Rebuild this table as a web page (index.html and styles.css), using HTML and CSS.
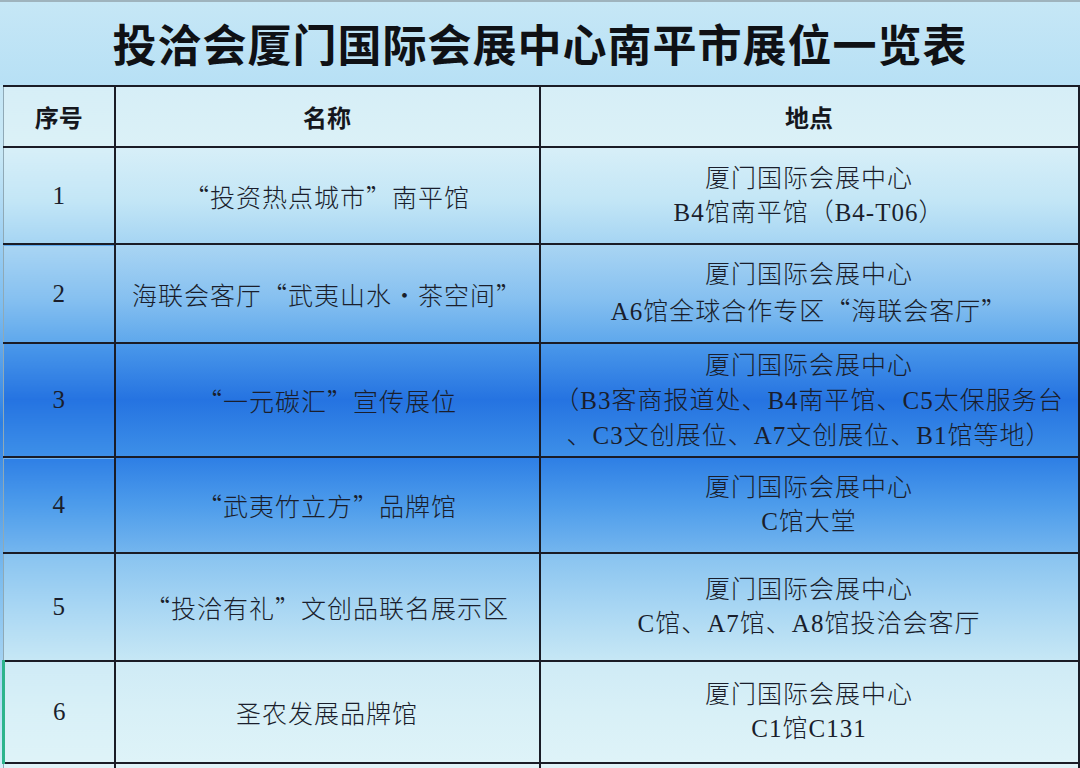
FILE: index.html
```html
<!DOCTYPE html>
<html lang="zh-CN">
<head>
<meta charset="utf-8">
<title>投洽会厦门国际会展中心南平市展位一览表</title>
<link rel="stylesheet" href="styles.css">
</head>
<body>
<div class="page">
  <div class="title">投洽会厦门国际会展中心南平市展位一览表</div>
  <table class="booths">
    <colgroup>
      <col class="c-no">
      <col class="c-name">
      <col class="c-loc">
    </colgroup>
    <thead>
      <tr class="head">
        <th>序号</th>
        <th>名称</th>
        <th>地点</th>
      </tr>
    </thead>
    <tbody>
      <tr class="r1">
        <td class="no">1</td>
        <td class="name"><span class="q">“</span>投资热点城市<span class="q">”</span>南平馆</td>
        <td class="loc">厦门国际会展中心<br>B4馆南平馆（B4-T06）</td>
      </tr>
      <tr class="r2">
        <td class="no">2</td>
        <td class="name">海联会客厅<span class="q">“</span>武夷山水<span class="q">・</span>茶空间<span class="q">”</span></td>
        <td class="loc">厦门国际会展中心<br>A6馆全球合作专区<span class="q">“</span>海联会客厅<span class="q">”</span></td>
      </tr>
      <tr class="r3">
        <td class="no">3</td>
        <td class="name"><span class="q">“</span>一元碳汇<span class="q">”</span>宣传展位</td>
        <td class="loc">厦门国际会展中心<br>（B3客商报道处、B4南平馆、C5太保服务台<br>、C3文创展位、A7文创展位、B1馆等地）</td>
      </tr>
      <tr class="r4">
        <td class="no">4</td>
        <td class="name"><span class="q">“</span>武夷竹立方<span class="q">”</span>品牌馆</td>
        <td class="loc">厦门国际会展中心<br>C馆大堂</td>
      </tr>
      <tr class="r5">
        <td class="no">5</td>
        <td class="name"><span class="q">“</span>投洽有礼<span class="q">”</span>文创品联名展示区</td>
        <td class="loc">厦门国际会展中心<br>C馆、A7馆、A8馆投洽会客厅</td>
      </tr>
      <tr class="r6">
        <td class="no">6</td>
        <td class="name">圣农发展品牌馆</td>
        <td class="loc">厦门国际会展中心<br>C1馆C131</td>
      </tr>
      <tr class="r7">
        <td class="no"></td>
        <td class="name"></td>
        <td class="loc"></td>
      </tr>
    </tbody>
  </table>
</div>
</body>
</html>
```

FILE: styles.css
```css
html, body {
  margin: 0;
  padding: 0;
}
body {
  width: 1080px;
  height: 768px;
  overflow: hidden;
  background: #cfe9f5;
  font-family: "Liberation Serif", "Noto Sans CJK SC", serif;
  color: #1a1e2c;
}
.page {
  width: 1080px;
  height: 768px;
  overflow: hidden;
  background: linear-gradient(180deg, #c0e4f6 0%, #c8e8f6 20%, #7dbdf0 40%, #2c7fe4 55%, #7cbcee 75%, #d6eef7 100%);
}
.title {
  height: 83px;
  border-top: 2px solid #9fb3bd;
  background: linear-gradient(180deg, #c6e7f6 0%, #b7e0f5 100%);
  text-align: center;
  font-family: "Noto Sans CJK SC", serif;
  font-weight: 700;
  font-size: 44px;
  letter-spacing: 1px;
  line-height: 83px;
  color: #0f1115;
}
.booths {
  margin-left: 2px;
  width: 1075px;
  border-collapse: collapse;
  table-layout: fixed;
}
.c-no { width: 111px; }
.c-name { width: 425px; }
.c-loc { width: 539px; }
.booths th,
.booths td {
  border: 2px solid #1a1c26;
  padding: 0;
  text-align: center;
  vertical-align: middle;
}
.booths th:first-child,
.booths td:first-child {
  border-left: 1px solid #8fa9b6;
}
.head th {
  height: 59px;
  font-family: "Noto Sans CJK SC", sans-serif;
  font-weight: 700;
  font-size: 24px;
  color: #15171d;
  background: linear-gradient(180deg, #d6eef7 0%, #dbf1f7 100%);
}
.no {
  font-size: 25px;
}
.name {
  font-size: 25px;
  font-weight: 300;
  letter-spacing: 1px;
  white-space: nowrap;
}
.loc {
  font-size: 25px;
  font-weight: 300;
  letter-spacing: 1px;
  line-height: 34px;
  white-space: nowrap;
}
.q {
  font-family: "Noto Sans CJK SC", sans-serif;
}
.r1 td { height: 95px; background: linear-gradient(180deg, #d7eff8 0%, #c3e6f6 55%, #a6d5f3 100%); }
.r2 td { height: 97px; background: linear-gradient(180deg, #a9d5f3 0%, #86c0f0 55%, #5fa8ec 100%); }
.r3 td { height: 112px; background: linear-gradient(180deg, #4a98ea 0%, #2573e1 50%, #3d8fe8 100%); }
.r3 .loc { line-height: 35px; }
.r4 td { height: 94px; background: linear-gradient(180deg, #2e7fe5 0%, #4d9ceb 50%, #73b5ee 100%); }
.r5 td { height: 106px; background: linear-gradient(180deg, #88c3f0 0%, #a8d6f3 50%, #c6e7f5 100%); }
.r6 td { height: 100px; background: linear-gradient(180deg, #cfebf6 0%, #d8f0f7 50%, #def3f8 100%); }
.r6 td:first-child { border-left: 3px solid #2db48c; }
.r7 td { height: 30px; background: #e0f3f8; }
```
